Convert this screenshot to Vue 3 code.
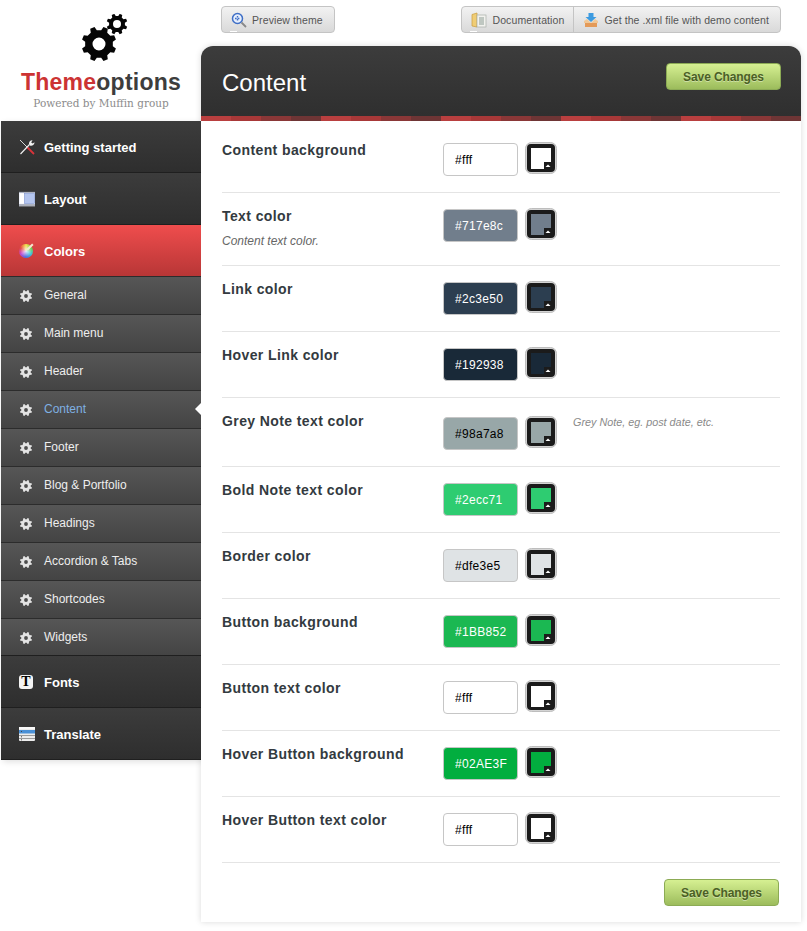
<script setup>
// builds a toothed wheel outline, hole cut out with evenodd
function gear(cx, cy, outer, inner, hole, teeth = 8) {
  const step = (Math.PI * 2) / teeth
  const pt = (r, a) => `${(cx + r * Math.cos(a)).toFixed(2)} ${(cy + r * Math.sin(a)).toFixed(2)}`
  let d = ''
  for (let i = 0; i < teeth; i++) {
    const a = i * step - step / 2
    d += `${i ? 'L' : 'M'}${pt(inner, a - step * 0.3)}L${pt(outer, a - step * 0.17)}L${pt(outer, a + step * 0.17)}L${pt(inner, a + step * 0.3)}`
  }
  d += `ZM${cx - hole} ${cy}a${hole} ${hole} 0 1 0 ${hole * 2} 0a${hole} ${hole} 0 1 0 ${-hole * 2} 0Z`
  return d
}

const bigGear = gear(17, 30, 17.5, 14, 6.5)
const smallGear = gear(35, 10, 10.5, 8, 4)
const subGear = gear(7, 7, 6.2, 4.8, 1.9)

const subItems = ['General', 'Main menu', 'Header', 'Content', 'Footer', 'Blog & Portfolio', 'Headings', 'Accordion & Tabs', 'Shortcodes', 'Widgets']

const rows = [
  { label: 'Content background', value: '#fff', color: '#ffffff', ink: '#000' },
  { label: 'Text color', desc: 'Content text color.', value: '#717e8c', color: '#717e8c', ink: '#fff' },
  { label: 'Link color', value: '#2c3e50', color: '#2c3e50', ink: '#fff' },
  { label: 'Hover Link color', value: '#192938', color: '#192938', ink: '#fff' },
  { label: 'Grey Note text color', value: '#98a7a8', color: '#98a7a8', ink: '#000', note: 'Grey Note, eg. post date, etc.' },
  { label: 'Bold Note text color', value: '#2ecc71', color: '#2ecc71', ink: '#fff' },
  { label: 'Border color', value: '#dfe3e5', color: '#dfe3e5', ink: '#000' },
  { label: 'Button background', value: '#1BB852', color: '#1bb852', ink: '#fff' },
  { label: 'Button text color', value: '#fff', color: '#ffffff', ink: '#000' },
  { label: 'Hover Button background', value: '#02AE3F', color: '#02ae3f', ink: '#fff' },
  { label: 'Hover Button text color', value: '#fff', color: '#ffffff', ink: '#000' }
]
</script>

<template>
  <div class="page">
    <aside class="side">
      <div class="logo">
        <svg class="gears" width="48" height="48" viewBox="0 0 48 48">
          <path :d="bigGear" fill="#050505" fill-rule="evenodd" />
          <path :d="smallGear" fill="#050505" fill-rule="evenodd" />
        </svg>
        <div class="logo-name"><span>Theme</span>options</div>
        <div class="logo-by">Powered by Muffin group</div>
      </div>

      <nav class="menu">
        <a class="item">
          <svg class="ico" width="16" height="16" viewBox="0 0 16 16">
            <path d="M1 1l7.500 7.500" stroke="#d8d8d8" stroke-width="1" />
            <path d="M8.500 8.500L15 15" stroke="#d9343a" stroke-width="1.800" />
            <path d="M1.500 15L10.500 5.500" stroke="#f2f2f2" stroke-width="1.100" />
            <path d="M13.500 1.200a3.400 3.400 0 0 0-3.400 4.400l1.200 1.100a3.400 3.400 0 0 0 4.200-3.400l-1.800 1.200-1.500-1z" fill="#f2f2f2" />
          </svg>
          Getting started
        </a>
        <a class="item">
          <svg class="ico" width="16" height="15" viewBox="0 0 16 15">
            <rect width="16" height="15" fill="#6d7488" />
            <rect x="0" y="1" width="16" height="12" fill="#eef0f8" />
            <rect x="1" y="2" width="4" height="10" fill="#fff" />
            <rect x="5.500" y="2" width="10" height="10" fill="#b4c5ee" stroke="#7f95d0" stroke-width=".6" />
            <rect y="14" width="16" height="1" fill="#e8e8e8" />
          </svg>
          Layout
        </a>
        <a class="item active">
          <span class="wheel"></span>
          Colors
        </a>
        <a v-for="sub in subItems" :key="sub" :class="['sub', { current: sub === 'Content' }]">
          <svg class="ico" width="14" height="14" viewBox="0 0 14 14">
            <path :d="subGear" fill="#e4e4e4" fill-rule="evenodd" />
          </svg>
          {{ sub }}
        </a>
        <a class="item">
          <span class="t-ico">T</span>
          Fonts
        </a>
        <a class="item">
          <svg class="ico" width="16" height="14" viewBox="0 0 16 14">
            <rect width="16" height="14" rx="1" fill="#ececec" />
            <rect y="0" width="16" height="2" fill="#f8f8f8" />
            <rect y="3" width="16" height="3.500" fill="#4a90d6" />
            <path d="M0 8.500h16M0 11.500h16" stroke="#9a9a9a" />
            <path d="M2 4.500h1M2 9.800h1M2 12.800h1" stroke="#444" />
          </svg>
          Translate
        </a>
      </nav>
    </aside>

    <main class="right">
      <div class="topbar">
        <div class="group">
          <a class="tbtn">
            <svg width="16" height="16" viewBox="0 0 16 16">
              <circle cx="6.500" cy="6.500" r="5" fill="#e6eefc" stroke="#3f6fc6" stroke-width="1.500" />
              <path d="M4 6.500h5M6.500 4v5" stroke="#3f6fc6" stroke-width="1.400" stroke-dasharray="1.600 1.200" />
              <path d="M10.500 10.500l4.500 4.500" stroke="#888" stroke-width="1.800" />
            </svg>
            Preview theme
          </a>
        </div>
        <div class="group">
          <a class="tbtn">
            <svg width="16" height="16" viewBox="0 0 16 16">
              <path d="M1 2.500L6 1v14l-5-1z" fill="#f0cd75" stroke="#c89c3c" stroke-width=".7" />
              <rect x="6" y="3" width="9" height="12" fill="#f2f2ee" stroke="#a8b0a8" stroke-width=".7" />
              <path d="M8 6h5M8 8h5M8 10h5M8 12h5" stroke="#8c9c94" />
            </svg>
            Documentation
          </a>
          <a class="tbtn">
            <svg width="16" height="16" viewBox="0 0 16 16">
              <path d="M1 9l3-2 4 4 4-4 3 2v2H1z" fill="#f0c898" />
              <rect x="2" y="11" width="12" height="4" fill="#e49a58" />
              <path d="M5.500 1h5v4h3L8 10 2.500 5h3z" fill="#3d9be0" />
            </svg>
            Get the .xml file with demo content
          </a>
        </div>
      </div>

      <section class="panel">
        <header class="head">
          <h1>Content</h1>
          <button class="save">Save Changes</button>
        </header>
        <div class="stripes"></div>

        <div class="rows">
          <div v-for="row in rows" :key="row.label" :class="['row', { noted: row.note }]">
            <div class="label">
              <strong>{{ row.label }}</strong>
              <em v-if="row.desc">{{ row.desc }}</em>
            </div>
            <input
              class="field"
              type="text"
              readonly
              :value="row.value"
              :style="{ background: row.color, color: row.ink }"
            />
            <svg class="picker" width="32" height="32" viewBox="0 0 32 32">
              <rect x="0.500" y="0.500" width="31" height="31" rx="6" fill="#d4d4d4" stroke="#bdbdbd" />
              <rect x="2" y="2" width="28" height="28" rx="4" fill="#1b1b1b" />
              <path d="M6 6h20v14h-7v7H6z" :fill="row.color" />
              <path d="M20.500 25l2.500-2.500 2.500 2.500z" fill="#fff" />
            </svg>
            <div v-if="row.note" class="note">{{ row.note }}</div>
          </div>
        </div>

        <footer class="foot">
          <button class="save">Save Changes</button>
        </footer>
      </section>
    </main>
  </div>
</template>

<style>
html, body {
  background: #fff;
  overflow: hidden;
}
</style>

<style scoped>
.page {
  display: flex;
  align-items: flex-start;
  width: 807px;
  height: 931px;
  padding-left: 1px;
  box-sizing: border-box;
  font-family: "Liberation Sans", Arial, sans-serif;
}

.side {
  width: 200px;
  flex: none;
}

.logo {
  height: 121px;
  display: flex;
  flex-direction: column;
  align-items: center;
  box-sizing: border-box;
  padding-top: 14px;
}

.gears {
  margin-left: 10px;
  margin-bottom: 8px;
}

.logo-name {
  font-size: 23px;
  line-height: 24px;
  font-weight: bold;
  color: #3d3d3d;
  letter-spacing: 0.25px;
}

.logo-name span {
  color: #cc3333;
}

.logo-by {
  margin-top: 3px;
  font-family: "DejaVu Serif", serif;
  font-size: 10.5px;
  line-height: 13px;
  color: #8c8c8c;
}

.menu {
  box-shadow: 2px 2px 6px rgba(0, 0, 0, 0.12);
}

.item,
.sub {
  display: flex;
  align-items: center;
  position: relative;
  box-sizing: border-box;
  padding-left: 43px;
}

.item {
  height: 52px;
  padding-top: 2px;
  font-size: 13px;
  font-weight: bold;
  color: #fff;
  background: linear-gradient(#3c3c3c, #2e2e2e);
  border-bottom: 1px solid #1f1f1f;
}

.item.active {
  height: 51px;
  background: linear-gradient(#ef4d4d, #b83636);
  border-bottom: 0;
}

.sub {
  height: 38px;
  padding-bottom: 2px;
  font-size: 12px;
  color: #eee;
  background: linear-gradient(#565656, #444);
  border-top: 1px solid #2c2c2c;
}

.sub + .item {
  height: 53px;
  margin-top: -1px;
  border-top: 1px solid #1f1f1f;
}

.sub.current {
  color: #7fb0e2;
}

.sub.current::after {
  content: "";
  position: absolute;
  right: 0;
  top: 12px;
  border: 6px solid transparent;
  border-right-color: #fff;
  border-left-width: 0;
}

.ico {
  position: absolute;
  left: 18px;
  top: 50%;
  transform: translateY(-50%);
}

.wheel {
  position: absolute;
  left: 18px;
  top: 19px;
  width: 14px;
  height: 14px;
  border-radius: 50%;
  background:
    radial-gradient(circle, rgba(255, 255, 255, 0.85), rgba(255, 255, 255, 0) 60%),
    conic-gradient(#f4e04d, #6fd04a, #3dc6d8, #4a70e0, #c24ad0, #e8473f, #f4e04d);
}

.wheel::after {
  content: "";
  position: absolute;
  left: 7px;
  top: 2px;
  width: 8px;
  height: 2px;
  background: #f6e7d0;
  transform: rotate(-45deg);
}

.t-ico {
  position: absolute;
  left: 18px;
  top: 19px;
  width: 14px;
  height: 14px;
  border-radius: 3px;
  background: #f4f4f4;
  color: #000;
  font-family: "Liberation Serif", serif;
  font-size: 14px;
  font-weight: bold;
  line-height: 14px;
  text-align: center;
}

.right {
  width: 600px;
  flex: none;
}

.topbar {
  display: flex;
  justify-content: space-between;
  height: 46px;
  box-sizing: border-box;
  padding: 6px 20px 0;
}

.group {
  position: relative;
  display: flex;
  height: 27px;
  border: 1px solid #c4c4c4;
  border-radius: 4px;
  overflow: hidden;
  box-sizing: border-box;
  background: linear-gradient(#f2f2f2, #d9d9d9);
}

.group::before {
  content: "";
  position: absolute;
  left: 8px;
  bottom: 0;
  width: 7px;
  height: 1px;
  background: #fff;
}

.tbtn {
  display: flex;
  align-items: center;
  gap: 5px;
  padding: 0 9px;
  font-size: 10.5px;
  color: #555;
  letter-spacing: 0.1px;
}

.tbtn + .tbtn {
  padding-right: 11px;
  border-left: 1px solid #c4c4c4;
}

.group:first-child .tbtn {
  padding-right: 11px;
}

.panel {
  background: #fff;
  border-radius: 12px 12px 0 0;
  box-shadow: 0 0 6px rgba(0, 0, 0, 0.15);
}

.head {
  display: flex;
  align-items: flex-start;
  justify-content: space-between;
  height: 70px;
  box-sizing: border-box;
  padding: 17px 20px 0 21px;
  border-radius: 12px 12px 0 0;
  background: linear-gradient(#3c3c3c, #2f2f2f);
}

.head h1 {
  margin: 6px 0 0;
  font-size: 24px;
  line-height: 28px;
  font-weight: normal;
  color: #fff;
}

.stripes {
  height: 5px;
  background: repeating-linear-gradient(90deg,
    #b93f3f 0 30px, #a83838 30px 60px, #8a3737 60px 90px, #6e3535 90px 120px);
}

.save {
  width: 115px;
  height: 27px;
  padding: 0;
  border: 1px solid #8cab55;
  border-radius: 4px;
  background: linear-gradient(#d6f092, #9cbc5c);
  font-family: inherit;
  font-size: 12px;
  font-weight: bold;
  letter-spacing: -0.1px;
  color: #4b5f25;
  text-shadow: 0 1px 0 rgba(255, 255, 255, 0.4);
}

.rows {
  padding: 6px 21px 0;
}

.row {
  display: flex;
  align-items: flex-start;
  padding: 16px 0;
  border-bottom: 1px solid #e4e4e4;
}

.row.noted .field {
  margin-top: 3px;
}

.row.noted .picker {
  margin-top: 2px;
}

.label {
  width: 221px;
  flex: none;
}

.label strong {
  display: block;
  margin-top: -1px;
  font-size: 14px;
  line-height: 16px;
  color: #333a40;
  letter-spacing: 0.4px;
}

.label em {
  display: block;
  margin-top: 10px;
  font-size: 12px;
  line-height: 15px;
  color: #666;
}

.field {
  width: 75px;
  height: 33px;
  box-sizing: border-box;
  padding: 0 0 0 11px;
  border: 1px solid #c6c6c6;
  border-radius: 4px;
  font-family: inherit;
  font-size: 12px;
  letter-spacing: 0.3px;
  outline: none;
}

.picker {
  margin-top: -1px;
  margin-left: 7px;
  flex: none;
}

.note {
  margin-left: 16px;
  min-height: 36px;
  font-size: 10.8px;
  line-height: 16px;
  font-style: italic;
  color: #8a8a8a;
}

.foot {
  display: flex;
  justify-content: flex-end;
  height: 59px;
  box-sizing: border-box;
  padding: 16px 22px 0 0;
}
</style>
